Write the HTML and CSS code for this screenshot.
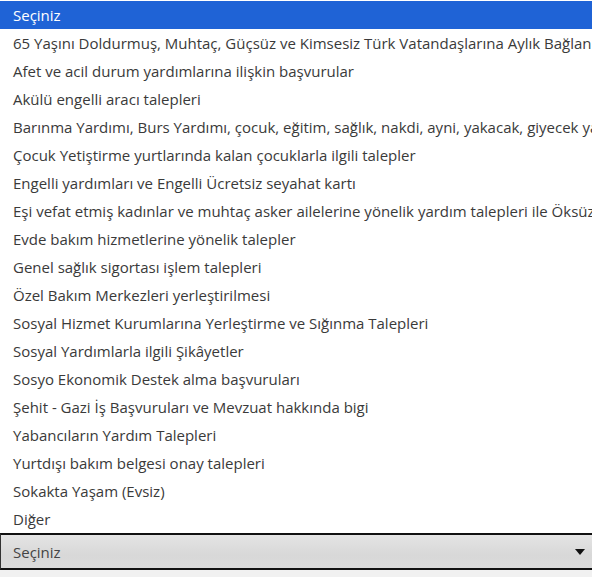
FILE: index.html
```html
<!DOCTYPE html>
<html lang="tr">
<head>
<meta charset="utf-8">
<link rel="stylesheet" href="styles.css">
</head>
<body>
<div class="page">
  <ul class="options">
    <li class="opt selected">Seçiniz</li>
    <li class="opt">65 Yaşını Doldurmuş, Muhtaç, Güçsüz ve Kimsesiz Türk Vatandaşlarına Aylık Bağlanması</li>
    <li class="opt">Afet ve acil durum yardımlarına ilişkin başvurular</li>
    <li class="opt">Akülü engelli aracı talepleri</li>
    <li class="opt">Barınma Yardımı, Burs Yardımı, çocuk, eğitim, sağlık, nakdi, ayni, yakacak, giyecek yardımı</li>
    <li class="opt">Çocuk Yetiştirme yurtlarında kalan çocuklarla ilgili talepler</li>
    <li class="opt">Engelli yardımları ve Engelli Ücretsiz seyahat kartı</li>
    <li class="opt">Eşi vefat etmiş kadınlar ve muhtaç asker ailelerine yönelik yardım talepleri ile Öksüz ve yetim</li>
    <li class="opt">Evde bakım hizmetlerine yönelik talepler</li>
    <li class="opt">Genel sağlık sigortası işlem talepleri</li>
    <li class="opt">Özel Bakım Merkezleri yerleştirilmesi</li>
    <li class="opt">Sosyal Hizmet Kurumlarına Yerleştirme ve Sığınma Talepleri</li>
    <li class="opt">Sosyal Yardımlarla ilgili Şikâyetler</li>
    <li class="opt">Sosyo Ekonomik Destek alma başvuruları</li>
    <li class="opt">Şehit - Gazi İş Başvuruları ve Mevzuat hakkında bigi</li>
    <li class="opt">Yabancıların Yardım Talepleri</li>
    <li class="opt">Yurtdışı bakım belgesi onay talepleri</li>
    <li class="opt">Sokakta Yaşam (Evsiz)</li>
    <li class="opt">Diğer</li>
  </ul>
  <div class="select">
    <span class="select-value">Seçiniz</span>
    <span class="arrow"></span>
  </div>
  <div class="below"></div>
</div>
</body>
</html>
```
FILE: styles.css
```css
html, body {
  margin: 0;
  padding: 0;
  background: #ffffff;
}
.page {
  width: 592px;
  height: 577px;
  overflow: hidden;
  font-family: "Open Sans", "Liberation Sans", sans-serif;
  font-size: 15px;
  color: #3a3a3a;
  display: flex;
  flex-direction: column;
}
.options {
  list-style: none;
  margin: 0;
  padding: 1px 0 0 0;
  border-top: 0;
  background: #fff;
}
.opt {
  height: 28px;
  line-height: 28px;
  padding-left: 13px;
  white-space: nowrap;
  overflow: hidden;
}
.opt.selected {
  background: #1f63d6;
  color: #ffffff;
}
.select {
  height: 33px;
  border-top: 2px solid #111;
  border-bottom: 2px solid #111;
  border-left: 1px solid #333;
  background: linear-gradient(#e4e4e4, #d8d8d8 60%, #dadada);
  display: flex;
  align-items: center;
  justify-content: space-between;
  padding: 0 7px 0 12px;
  color: #444;
}
.arrow {
  width: 0;
  height: 0;
  border-left: 5px solid transparent;
  border-right: 5px solid transparent;
  border-top: 6px solid #111;
  margin-top: 1px;
}
.below {
  flex: 1;
  background: #f1f1f1;
}
```
